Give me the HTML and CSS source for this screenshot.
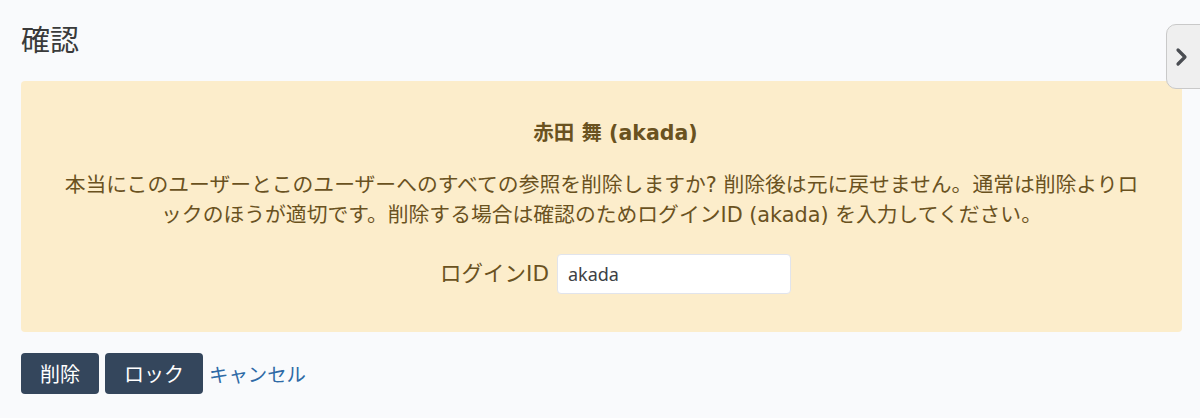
FILE: index.html
```html
<!DOCTYPE html>
<html lang="ja">
<head>
<meta charset="utf-8">
<title>確認</title>
<link rel="stylesheet" href="styles.css">
</head>
<body>
<div class="page">
  <h1 class="title">確認</h1>
  <div class="alert">
    <div class="alert-name">赤田 舞 (akada)</div>
    <p class="alert-text">本当にこのユーザーとこのユーザーへのすべての参照を削除しますか? 削除後は元に戻せません。通常は削除よりロックのほうが適切です。削除する場合は確認のためログインID (akada) を入力してください。</p>
    <div class="form-row">
      <label class="form-label" for="login">ログインID</label>
      <input class="form-input" id="login" type="text" value="akada">
    </div>
  </div>
  <div class="actions">
    <button class="btn">削除</button>
    <button class="btn">ロック</button>
    <a class="link" href="#">キャンセル</a>
  </div>
</div>
<div class="side-tab">
  <svg width="14" height="20" viewBox="0 0 14 20"><path d="M3 3 L10 10 L3 17" fill="none" stroke="#4a4d52" stroke-width="3.2" stroke-linecap="round" stroke-linejoin="round"/></svg>
</div>
</body>
</html>
```
FILE: styles.css
```css
html, body {
  margin: 0;
  padding: 0;
}
body {
  background: #f9fafc;
  font-family: "Noto Sans", "Noto Sans CJK JP", sans-serif;
  color: #333;
  height: 418px;
  overflow: hidden;
}
.page {
  padding: 0 18px 0 21px;
}
.title {
  margin: 0;
  padding-top: 22px;
  font-size: 29px;
  font-weight: 400;
  line-height: 36px;
  color: #3a3a3a;
  height: 59px;
}
.alert {
  background: #fcedcb;
  border-radius: 4px;
  padding: 37px 40px 38px 40px;
  color: #6a521f;
  text-align: center;
  font-family: "DejaVu Sans", "Noto Sans CJK JP", sans-serif;
}
.alert-name {
  font-size: 20.5px;
  font-weight: 700;
  line-height: 30px;
  padding-left: 28px;
}
.alert-text {
  margin: 22px 0 24px;
  font-size: 20.8px;
  line-height: 30px;
  line-break: loose;
}
.form-row {
  display: flex;
  justify-content: center;
  align-items: center;
  gap: 8px;
  padding-left: 28px;
}
.form-label {
  font-size: 21.5px;
  line-height: 30px;
}
.form-input {
  box-sizing: border-box;
  width: 234px;
  height: 40px;
  border: 1px solid #e1e4ec;
  border-radius: 4px;
  background: #fff;
  padding: 0 10px;
  font-family: "Noto Sans", sans-serif;
  font-size: 18px;
  color: #3d3f45;
}
.actions {
  display: flex;
  align-items: center;
  gap: 6px;
  margin-top: 21px;
}
.btn {
  height: 41px;
  padding: 0 19px;
  background: #34465c;
  color: #fff;
  border: none;
  border-radius: 4px;
  font-family: "Noto Sans", "Noto Sans CJK JP", sans-serif;
  font-size: 20px;
}
.link {
  color: #2f6aa6;
  text-decoration: none;
  font-size: 19.4px;
}
.side-tab {
  position: absolute;
  top: 24px;
  right: -12px;
  width: 46px;
  height: 65px;
  box-sizing: border-box;
  background: #efefef;
  border: 1px solid #c9c9c9;
  border-radius: 10px;
  display: flex;
  align-items: center;
  padding-left: 8px;
}
```
